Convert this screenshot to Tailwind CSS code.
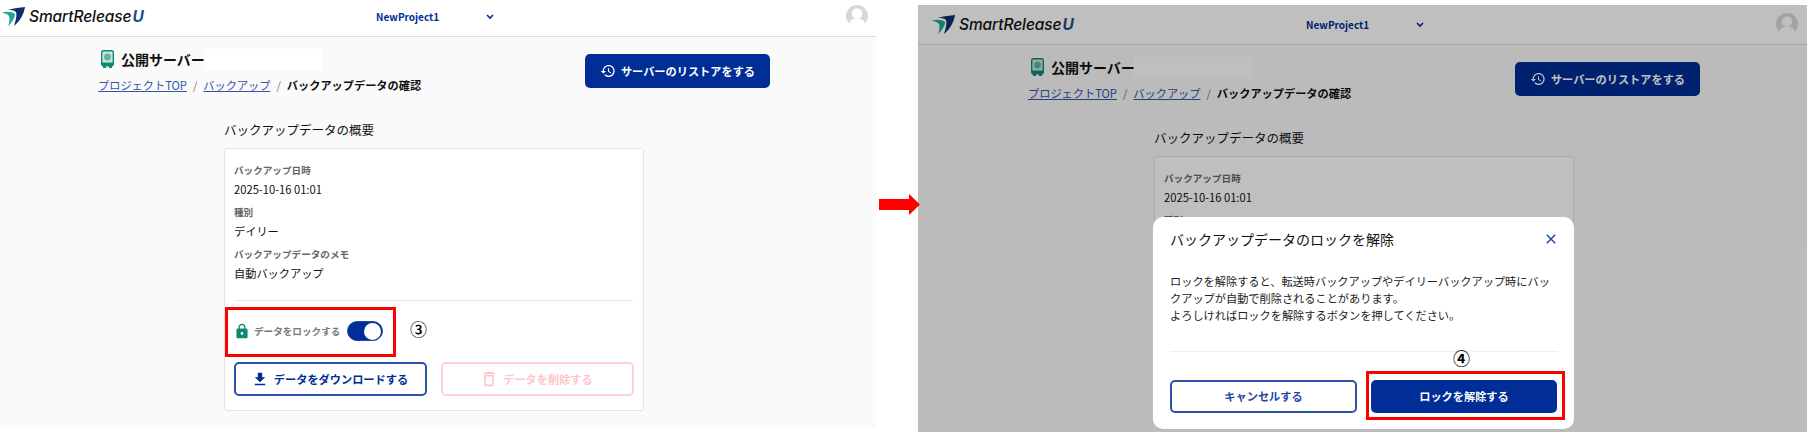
<!DOCTYPE html>
<html lang="ja">
<head>
<meta charset="utf-8">
<script src="https://cdn.jsdelivr.net/npm/@tailwindcss/browser@4"></script>
</head>
<body class="bg-white">
<div class="relative w-[1807px] h-[432px] overflow-hidden bg-white font-['Noto_Sans_CJK_JP',sans-serif] text-[#111]">
  <div class="flex items-start">
    <!-- LEFT -->
    <div class="w-[876px] h-[428px] overflow-hidden shrink-0">
      <div class="relative w-[889px] h-[431px] -ml-[12px] -mt-[3px] bg-[#fafafa]">
        <header class="h-[40px] bg-white border-b border-[#dcdcdc] flex items-center">
          <div class="w-[365px] pl-[14px] flex items-center gap-[3px]">
            <svg class="w-[24px] h-[20px]" viewBox="0 0 24 20"><path d="M6 3C12 1 18 .5 23 0c-1 7-5 14-11 19 2-6 3-11 2-14C12 3 9 3 6 3z" fill="#0d2f6e"/><path d="M0 5.500C5 4 10 5 13 7c0 4-3 8-7 12.500 2-5.500 2-10.500 0-11.500C4 6.500 2 6 0 5.500z" fill="#1fa894"/></svg>
            <span class="font-['Inter',sans-serif] italic text-[15.500px] leading-none tracking-[-0.1px] font-medium whitespace-nowrap">SmartRelease<span class="text-[#1c4f86] font-bold ml-[1px]">U</span></span>
          </div>
          <div class="w-[114px] ml-[23px] text-[10px] font-bold text-[#002d96]">NewProject1</div>
          <svg class="w-[8px] h-[6px] ml-[-4px]" viewBox="0 0 8 6"><path d="M1 1l3 3 3-3" fill="none" stroke="#002d96" stroke-width="1.6"/></svg>
          <svg class="w-[22px] h-[22px] ml-[352px] -mt-[1px]" viewBox="0 0 23 23"><circle cx="11.500" cy="11.500" r="11.500" fill="#d8d8d8"/><circle cx="11.500" cy="9" r="5.500" fill="#fff"/><path d="M3 20c1-4 4-6 8.500-6s7.500 2 8.500 6c-2 2-5 3-8.500 3S5 22 3 20z" fill="#fff"/></svg>
        </header>
        <div class="pl-[110px] pr-[107px] pt-[10px] flex justify-between">
          <div>
            <div class="h-[24px] flex items-center pl-[3px]">
              <svg class="w-[13px] h-[18px]" viewBox="0 0 13 18"><rect x=".7" y=".7" width="11.600" height="15" rx="1.500" fill="#cfe6e0" stroke="#0f8a72" stroke-width="1.400"/><circle cx="6.500" cy="7" r="3.500" fill="#5fb5a4"/><rect x="1" y="12.500" width="11" height="3.500" fill="#0f8a72"/><rect x="2" y="16" width="3" height="2" fill="#0f8a72"/><rect x="8" y="16" width="3" height="2" fill="#0f8a72"/></svg>
              <span class="ml-[7px] text-[14px] font-bold w-[83px] whitespace-nowrap">公開サーバー</span>
              <span class="w-[118px] h-[21px] bg-white"></span>
            </div>
            <nav class="mt-[6px] h-[16px] leading-[16px] text-[11.2px] whitespace-nowrap">
              <a class="underline text-[#3553a8]">プロジェクトTOP</a><span class="text-[#777] mx-[6px]">/</span><a class="underline text-[#3553a8]">バックアップ</a><span class="text-[#777] mx-[6px]">/</span><span class="font-bold">バックアップデータの確認</span>
            </nav>
          </div>
          <button class="mt-[7px] w-[185px] h-[34px] rounded-[5px] bg-[#002d96] text-white text-[11.2px] font-bold flex items-center justify-center gap-[5px]">
            <svg class="w-[16px] h-[16px]" viewBox="0 0 24 24" fill="#fff"><path d="M13 3c-4.970 0-9 4.030-9 9H1l3.890 3.890.07.140L9 12H6c0-3.870 3.130-7 7-7s7 3.130 7 7-3.130 7-7 7c-1.930 0-3.680-.79-4.940-2.060l-1.420 1.420C8.270 19.990 10.510 21 13 21c4.970 0 9-4.030 9-9s-4.030-9-9-9zm-1 5v5l4.280 2.540.72-1.210-3.500-2.080V8H12z"/></svg>
            サーバーのリストアをする
          </button>
        </div>
        <div class="ml-[236px] mt-[28px] w-[420px]">
          <h2 class="h-[18px] leading-[18px] text-[12.500px] font-normal mb-[9px]">バックアップデータの概要</h2>
          <div class="relative h-[263px] bg-white border border-[#e4e4e4] rounded-[3px] px-[9px] pt-[14px]">
            <dl>
              <dt class="h-[14px] leading-[14px] text-[9.600px] font-bold text-[#666]">バックアップ日時</dt>
              <dd class="mt-[2px] h-[20px] leading-[20px] text-[11.200px]">2025-10-16 01:01</dd>
              <dt class="mt-[6px] h-[14px] leading-[14px] text-[9.600px] font-bold text-[#666]">種別</dt>
              <dd class="mt-[2px] h-[20px] leading-[20px] text-[11.200px]">デイリー</dd>
              <dt class="mt-[6px] h-[14px] leading-[14px] text-[9.600px] font-bold text-[#666]">バックアップデータのメモ</dt>
              <dd class="mt-[2px] h-[20px] leading-[20px] text-[11.200px]">自動バックアップ</dd>
            </dl>
            <div class="mt-[17px] mx-[1px] h-px bg-[#e4e4e4]"></div>
            <div class="mt-[18px] h-[24px] flex items-center pl-[1px]">
              <svg class="w-[14px] h-[16px]" viewBox="3 0 18 23" fill="#0a8a72"><path d="M18 8h-1V6c0-2.760-2.240-5-5-5S7 3.240 7 6v2H6c-1.100 0-2 .9-2 2v10c0 1.100.9 2 2 2h12c1.100 0 2-.9 2-2V10c0-1.100-.9-2-2-2zm-6 9c-1.100 0-2-.9-2-2s.9-2 2-2 2 .9 2 2-.9 2-2 2zm3.100-9H8.900V6c0-1.710 1.390-3.100 3.100-3.100 1.710 0 3.100 1.390 3.100 3.100v2z"/></svg>
              <span class="ml-[5px] text-[9.600px] font-bold text-[#777] whitespace-nowrap w-[93px]">データをロックする</span>
              <span class="w-[36px] h-[20px] rounded-full bg-[#002d96] border border-[#2049a4] flex items-center justify-end pr-[1px]"><span class="w-[17px] h-[17px] rounded-full bg-white"></span></span>
            </div>
            <div class="mt-[19px] flex gap-[14px]">
              <button class="w-[194px] h-[34px] rounded-[5px] border-2 border-[#2c52a8] text-[#002d96] text-[11.200px] font-bold flex items-center justify-center gap-[7px]">
                <svg class="w-[14px] h-[14px]" viewBox="3 2 18 19" fill="#002d96"><path d="M19 9h-4V3H9v6H5l7 7 7-7zM5 18v2h14v-2H5z"/></svg>データをダウンロードする</button>
              <button class="w-[194px] h-[34px] rounded-[5px] border-2 border-[#ffd0d5] text-[#ffc4cb] text-[11.200px] font-bold flex items-center justify-center gap-[7px]">
                <svg class="w-[14px] h-[16px]" viewBox="4 2 16 20" fill="#ffc4cb"><path d="M6 19c0 1.100.9 2 2 2h8c1.100 0 2-.9 2-2V7H6v12zM8 9h8v10H8V9zm7.500-5l-1-1h-5l-1 1H5v2h14V4z"/></svg>データを削除する</button>
            </div>
            <div class="absolute left-[0px] top-[158px] w-[171px] h-[50px] border-[3px] border-[#ff0000]"></div>
            <span class="absolute left-[185px] top-[169px] text-[17px] leading-[22px] text-black font-medium">③</span>
          </div>
        </div>
      </div>
    </div>
    <!-- RIGHT -->
    <div class="relative ml-[42px] mt-[5px] w-[889px] h-[427px] overflow-hidden shrink-0 bg-[#fafafa]">
      <header class="h-[40px] bg-white border-b border-[#dcdcdc] flex items-center">
        <div class="w-[365px] pl-[14px] flex items-center gap-[3px]">
          <svg class="w-[24px] h-[20px]" viewBox="0 0 24 20"><path d="M6 3C12 1 18 .5 23 0c-1 7-5 14-11 19 2-6 3-11 2-14C12 3 9 3 6 3z" fill="#0d2f6e"/><path d="M0 5.500C5 4 10 5 13 7c0 4-3 8-7 12.500 2-5.500 2-10.500 0-11.500C4 6.500 2 6 0 5.500z" fill="#1fa894"/></svg>
          <span class="font-['Inter',sans-serif] italic text-[15.500px] leading-none tracking-[-0.1px] font-medium whitespace-nowrap">SmartRelease<span class="text-[#1c4f86] font-bold ml-[1px]">U</span></span>
        </div>
        <div class="w-[114px] ml-[23px] text-[10px] font-bold text-[#002d96]">NewProject1</div>
        <svg class="w-[8px] h-[6px] ml-[-4px]" viewBox="0 0 8 6"><path d="M1 1l3 3 3-3" fill="none" stroke="#002d96" stroke-width="1.6"/></svg>
        <svg class="w-[22px] h-[22px] ml-[352px] -mt-[1px]" viewBox="0 0 23 23"><circle cx="11.500" cy="11.500" r="11.500" fill="#d8d8d8"/><circle cx="11.500" cy="9" r="5.500" fill="#fff"/><path d="M3 20c1-4 4-6 8.500-6s7.500 2 8.500 6c-2 2-5 3-8.500 3S5 22 3 20z" fill="#fff"/></svg>
      </header>
      <div class="pl-[110px] pr-[107px] pt-[10px] flex justify-between">
        <div>
          <div class="h-[24px] flex items-center pl-[3px]">
            <svg class="w-[13px] h-[18px]" viewBox="0 0 13 18"><rect x=".7" y=".7" width="11.600" height="15" rx="1.500" fill="#cfe6e0" stroke="#0f8a72" stroke-width="1.400"/><circle cx="6.500" cy="7" r="3.500" fill="#5fb5a4"/><rect x="1" y="12.500" width="11" height="3.500" fill="#0f8a72"/><rect x="2" y="16" width="3" height="2" fill="#0f8a72"/><rect x="8" y="16" width="3" height="2" fill="#0f8a72"/></svg>
            <span class="ml-[7px] text-[14px] font-bold w-[83px] whitespace-nowrap">公開サーバー</span>
            <span class="w-[118px] h-[21px] bg-white"></span>
          </div>
          <nav class="mt-[6px] h-[16px] leading-[16px] text-[11.2px] whitespace-nowrap">
            <a class="underline text-[#3553a8]">プロジェクトTOP</a><span class="text-[#777] mx-[6px]">/</span><a class="underline text-[#3553a8]">バックアップ</a><span class="text-[#777] mx-[6px]">/</span><span class="font-bold">バックアップデータの確認</span>
          </nav>
        </div>
        <button class="mt-[7px] w-[185px] h-[34px] rounded-[5px] bg-[#002d96] text-white text-[11.2px] font-bold flex items-center justify-center gap-[5px]">
          <svg class="w-[16px] h-[16px]" viewBox="0 0 24 24" fill="#fff"><path d="M13 3c-4.970 0-9 4.030-9 9H1l3.890 3.890.07.140L9 12H6c0-3.870 3.130-7 7-7s7 3.130 7 7-3.130 7-7 7c-1.930 0-3.680-.79-4.940-2.060l-1.420 1.420C8.270 19.990 10.510 21 13 21c4.970 0 9-4.030 9-9s-4.030-9-9-9zm-1 5v5l4.280 2.540.72-1.210-3.500-2.080V8H12z"/></svg>
          サーバーのリストアをする
        </button>
      </div>
      <div class="ml-[236px] mt-[28px] w-[420px]">
        <h2 class="h-[18px] leading-[18px] text-[12.500px] font-normal mb-[9px]">バックアップデータの概要</h2>
        <div class="relative h-[263px] bg-white border border-[#e4e4e4] rounded-[3px] px-[9px] pt-[14px]">
          <dl>
            <dt class="h-[14px] leading-[14px] text-[9.600px] font-bold text-[#666]">バックアップ日時</dt>
            <dd class="mt-[2px] h-[20px] leading-[20px] text-[11.200px]">2025-10-16 01:01</dd>
            <dt class="mt-[6px] h-[14px] leading-[14px] text-[9.600px] font-bold text-[#666]">種別</dt>
          </dl>
        </div>
      </div>
      <!-- overlay + dialog -->
      <div class="absolute inset-0 bg-black/25"></div>
      <div role="dialog" class="absolute left-[235px] top-[212px] w-[421px] h-[212px] bg-white rounded-[10px] pl-[17px] pr-[16px] flex flex-col">
        <div class="h-[44px] flex items-center justify-between">
          <h3 class="text-[14px] font-normal whitespace-nowrap">バックアップデータのロックを解除</h3>
          <svg class="w-[10px] h-[10px] mr-[2px]" viewBox="0 0 10 10"><path d="M.8.8l8.400 8.400M9.200.8L.8 9.200" stroke="#1f47a6" stroke-width="1.500" fill="none"/></svg>
        </div>
        <p class="mt-[12px] h-[78px] text-[11.200px] leading-[17px] text-[#222]">ロックを解除すると、転送時バックアップやデイリーバックアップ時にバックアップが自動で削除されることがあります。<br>よろしければロックを解除するボタンを押してください。</p>
        <div class="h-px bg-[#eeeeee]"></div>
        <div class="mt-[28px] flex gap-[14px]">
          <button class="w-[187px] h-[33px] rounded-[5px] border-2 border-[#2c52a8] bg-white text-[#1f47a6] text-[11.200px] font-bold">キャンセルする</button>
          <button class="w-[186px] h-[33px] rounded-[5px] bg-[#002d96] text-white text-[11.200px] font-bold">ロックを解除する</button>
        </div>
        <div class="absolute left-[213px] top-[154px] w-[199px] h-[49px] border-[3px] border-[#ff0000]"></div>
        <span class="absolute left-[300px] top-[130px] text-[17px] leading-[22px] text-black font-bold">④</span>
      </div>
    </div>
  </div>
  <svg class="absolute left-[879px] top-[194px] w-[41px] h-[21px]" viewBox="0 0 41 21"><path d="M0 5h30V0l11 10.500L30 21v-5H0z" fill="#ff0000"/></svg>
</div>
</body>
</html>
